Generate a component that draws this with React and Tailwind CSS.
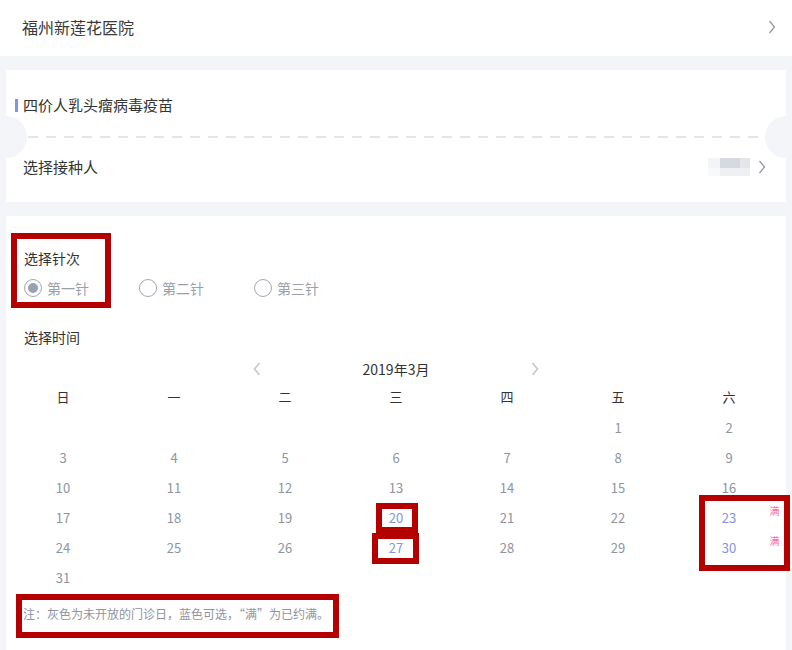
import React from "react";

const font = { fontFamily: '"Noto Sans CJK SC", "Liberation Sans", sans-serif' };

const Chevron = ({ className = "", color = "#9094a0", sw = 1.2 }) => (
  <svg width="8" height="14" viewBox="0 0 8 14" className={className}>
    <polyline points="1.5,1 6.5,7 1.5,13" fill="none" stroke={color} strokeWidth={sw} />
  </svg>
);

const weekdays = ["日", "一", "二", "三", "四", "五", "六"];
const blue = [20, 23, 27, 30];
const full = [23, 30];

const Radio = ({ label, checked }) => (
  <div className="flex w-[115px] items-center">
    <span className="flex h-[18px] w-[18px] items-center justify-center rounded-full border border-[#a3a7b3]">
      {checked && <span className="h-[10px] w-[10px] rounded-full bg-[#9aa1b5]" />}
    </span>
    <span className="ml-[5px] text-[14px] leading-[20px] text-[#9a9fab]">{label}</span>
  </div>
);

const Mark = ({ className }) => (
  <div className={`pointer-events-none absolute border-[6px] border-[#b50000] ${className}`} />
);

export default function App() {
  const cells = [...Array(5).fill(null), ...Array.from({ length: 31 }, (_, i) => i + 1)];
  const rows = [];
  for (let i = 0; i < cells.length; i += 7) rows.push(cells.slice(i, i + 7));

  return (
    <div className="relative min-h-[650px] w-[792px] overflow-hidden bg-[#f4f5f9]" style={font}>
      {/* hospital */}
      <div className="flex h-[56px] items-center justify-between bg-white pb-[3px] pl-[22px] pr-[16px]">
        <span className="text-[16px] leading-[22px] text-[#3a3a3a]">福州新莲花医院</span>
        <Chevron />
      </div>

      {/* vaccine card */}
      <div className="relative mx-[6px] mt-[14px] h-[132px] bg-white">
        <div className="box-content flex h-[20px] items-center pl-[9px] pt-[25px]">
          <span className="h-[13px] w-[3px] bg-[#8194e4]" />
          <span className="ml-[5px] text-[15px] leading-[20px] text-[#333]">四价人乳头瘤病毒疫苗</span>
        </div>
        <div className="ml-[22px] mt-[21px] h-[2px] w-[738px]">
          <svg width="738" height="2" className="block">
            <line x1="0" y1="1" x2="738" y2="1" stroke="#e4e6eb" strokeWidth="2" strokeDasharray="10 8" />
          </svg>
        </div>
        <div className="mt-[19px] flex h-[20px] items-center justify-between pl-[17px] pr-[20px]">
          <span className="text-[15px] leading-[20px] text-[#333]">选择接种人</span>
          <div className="flex items-center">
            <div className="flex flex-col blur-[0.6px]">
              <div className="flex">
                <span className="h-[10px] w-[12px] bg-[#f3f4f6]" />
                <span className="h-[10px] w-[20px] bg-[#d6d9e0]" />
                <span className="h-[10px] w-[10px] bg-[#e4e6eb]" />
              </div>
              <div className="flex">
                <span className="h-[8px] w-[12px] bg-[#f8f9fa]" />
                <span className="h-[8px] w-[30px] bg-[#eef0f3]" />
              </div>
            </div>
            <Chevron className="ml-[8px]" />
          </div>
        </div>
        <div className="absolute left-[-21px] top-[46px] h-[42px] w-[42px] rounded-full bg-[#f4f5f9]" />
        <div className="absolute right-[-21px] top-[46px] h-[42px] w-[42px] rounded-full bg-[#f4f5f9]" />
      </div>

      {/* schedule card */}
      <div className="mx-[6px] mt-[14px] bg-white pb-[30px] pt-[32px]">
        <div className="pl-[18px] text-[14px] leading-[20px] text-[#333]">选择针次</div>
        <div className="mt-[10px] flex pl-[18px]">
          <Radio label="第一针" checked />
          <Radio label="第二针" />
          <Radio label="第三针" />
        </div>
        <div className="mt-[29px] pl-[18px] text-[14px] leading-[20px] text-[#333]">选择时间</div>

        <div className="mt-[12px] flex h-[20px] items-center justify-center">
          <span className="flex w-[18px] justify-center">
            <Chevron className="rotate-180" color="#c9ccd3" sw={1.8} />
          </span>
          <span className="w-[260px] text-center text-[14px] text-[#333]">2019年3月</span>
          <span className="flex w-[18px] justify-center">
            <Chevron color="#c9ccd3" sw={1.8} />
          </span>
        </div>

        <div className="mx-auto mt-[3px] w-[777px]">
          <div className="grid h-[30px] grid-cols-7 items-center">
            {weekdays.map((w) => (
              <span key={w} className="text-center text-[13px] text-[#333]">{w}</span>
            ))}
          </div>
          {rows.map((r, ri) => (
            <div key={ri} className="grid h-[30px] grid-cols-7 items-center">
              {r.map((d, di) => (
                <div key={di} className="relative text-center text-[13px] leading-[19px]">
                  {d && (
                    <span className={blue.includes(d) ? "text-[#8194e2]" : "text-[#8e94a1]"}>{d}</span>
                  )}
                  {full.includes(d) && (
                    <span className="absolute right-[5px] top-[-3px] text-[10px] leading-[12px] text-[#f06ea9]">满</span>
                  )}
                </div>
              ))}
            </div>
          ))}
        </div>

        <div className="mt-[12px] pl-[17px] text-[12px] leading-[20px] text-[#8e94a1]">
          注：灰色为未开放的门诊日，蓝色可选，“满”为已约满。
        </div>
      </div>

      {/* annotation marks */}
      <Mark className="left-[11px] top-[233px] h-[75px] w-[100px]" />
      <Mark className="left-[376px] top-[503px] h-[30px] w-[42px]" />
      <Mark className="left-[372px] top-[533px] h-[31px] w-[47px]" />
      <Mark className="left-[699px] top-[495px] h-[76px] w-[91px]" />
      <Mark className="left-[16px] top-[594px] h-[44px] w-[323px]" />
    </div>
  );
}
